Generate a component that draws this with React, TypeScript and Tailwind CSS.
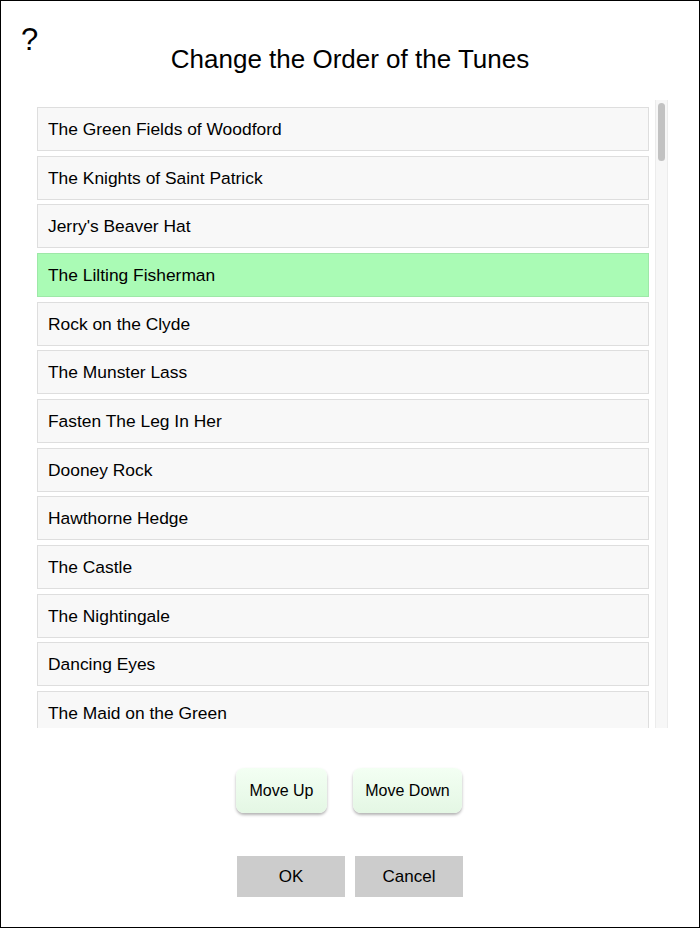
import React from "react";

const tunes = [
  "The Green Fields of Woodford",
  "The Knights of Saint Patrick",
  "Jerry's Beaver Hat",
  "The Lilting Fisherman",
  "Rock on the Clyde",
  "The Munster Lass",
  "Fasten The Leg In Her",
  "Dooney Rock",
  "Hawthorne Hedge",
  "The Castle",
  "The Nightingale",
  "Dancing Eyes",
  "The Maid on the Green",
];

export default function App() {
  return (
    <div
      className="w-[700px] h-[928px] border border-black bg-white text-black flex flex-col"
      style={{ fontFamily: '"Liberation Sans", Arial, sans-serif' }}
    >
      <div className="relative h-[99px] flex justify-center">
        <span className="absolute left-[20px] top-[21px] text-[31px] leading-[36px]">?</span>
        <h1 className="mt-[42px] text-[26px] leading-[32px] font-normal">
          Change the Order of the Tunes
        </h1>
      </div>
      <div className="flex ml-[35px] h-[628px]">
        <div className="w-[613px] h-full overflow-hidden pt-[7px] pl-[1px]">
          <div className="flex flex-col gap-[4.67px]">
            {tunes.map((t, i) => (
              <div
                key={t}
                className={
                  "h-[44px] shrink-0 border flex items-center pl-[10px] text-[17.4px] " +
                  (i === 3
                    ? "bg-[#aafbb5] border-[#9ee8a8]"
                    : "bg-[#f8f8f8] border-[#dedede]")
                }
              >
                {t}
              </div>
            ))}
          </div>
        </div>
        <div className="ml-[6px] w-[13px] h-full bg-[#f7f7f7] border-x border-[#ececec] pt-[3px]">
          <div className="mx-auto w-[7px] h-[58px] rounded-full bg-[#c2c2c2]" />
        </div>
      </div>
      <div className="flex justify-center gap-[26px] mt-[40px] pr-[2px]">
        <button className="w-[91px] h-[45px] rounded-[8px] bg-gradient-to-b from-[#f3fff3] to-[#e4f7e4] shadow-[0_2px_3px_rgba(0,0,0,0.3)] text-[16px]">
          Move Up
        </button>
        <button className="w-[109px] h-[45px] rounded-[8px] bg-gradient-to-b from-[#f3fff3] to-[#e4f7e4] shadow-[0_2px_3px_rgba(0,0,0,0.3)] text-[16px]">
          Move Down
        </button>
      </div>
      <div className="flex justify-center gap-[10px] mt-[43px]">
        <button className="w-[108px] h-[41px] bg-[#cccccc] text-[17px]">OK</button>
        <button className="w-[108px] h-[41px] bg-[#cccccc] text-[17px]">Cancel</button>
      </div>
    </div>
  );
}
